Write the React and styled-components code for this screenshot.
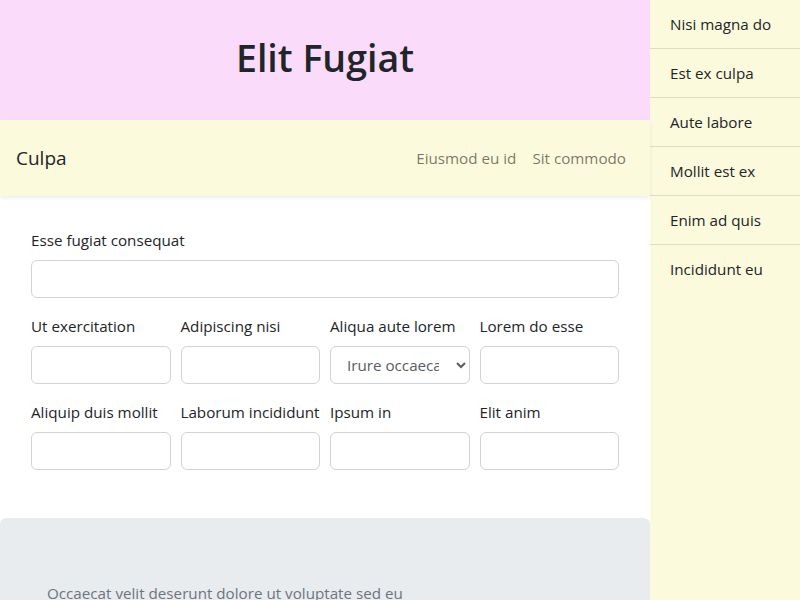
import React from "react";
import styled, { createGlobalStyle } from "styled-components";

const Global = createGlobalStyle`
  html, body { margin: 0; padding: 0; }
  body {
    font-family: "Open Sans", "Noto Sans", "Liberation Sans", sans-serif;
    font-size: 15.2px;
    line-height: 24px;
    color: #212529;
    background: #fff;
    overflow: hidden;
  }
  * { box-sizing: border-box; }
`;

const Page = styled.div`
  display: flex;
  width: 800px;
  min-height: 600px;
`;

const Main = styled.main`
  width: 650px;
  flex: none;
  display: flex;
  flex-direction: column;
`;

const Header = styled.header`
  background: #fadcfa;
  height: 120px;
  display: flex;
  align-items: center;
  justify-content: center;
  padding-bottom: 4px;
`;

const Title = styled.h1`
  margin: 0;
  font-size: 37.5px;
  line-height: 48px;
  font-weight: 600;
  color: #212529;
`;

const NavBar = styled.nav`
  position: relative;
  z-index: 1;
  background: #fcfadc;
  height: 76px;
  display: flex;
  align-items: center;
  justify-content: space-between;
  padding: 0 16px;
  box-shadow: 0 2px 4px rgba(0, 0, 0, 0.075);
`;

const Brand = styled.span`
  font-size: 19px;
  line-height: 30px;
`;

const NavLinks = styled.div`
  display: flex;
`;

const NavLink = styled.a`
  padding: 8px;
  color: rgba(0, 0, 0, 0.55);
  text-decoration: none;
`;

const Form = styled.form`
  background: #fff;
  padding: 32px 31px 48px;
  display: flex;
  flex-direction: column;
  gap: 16px;
`;

const Row = styled.div`
  display: grid;
  grid-template-columns: repeat(${(p) => p.$cols}, 1fr);
  gap: 10px;
`;

const Field = styled.div`
  display: flex;
  flex-direction: column;
  min-width: 0;
`;

const Label = styled.label`
  margin-bottom: 8px;
  line-height: 24px;
  white-space: nowrap;
`;

const Input = styled.input`
  height: 38px;
  width: 100%;
  border: 1px solid #ced4da;
  border-radius: 6px;
  background: #fff;
  font: inherit;
  padding: 6px 12px;
`;

const Select = styled.select`
  height: 38px;
  width: 100%;
  border: 1px solid #ced4da;
  border-radius: 6px;
  background: #fff;
  font: inherit;
  color: #595c5f;
  padding: 6px 14px 6px 12px;
`;

const Jumbo = styled.section`
  background: #e9ecef;
  border-radius: 6px 6px 0 0;
  padding: 63px 47px 48px;
  min-height: 120px;
`;

const Lead = styled.p`
  margin: 0;
  color: #6c757d;
  line-height: 24px;
`;

const Sidebar = styled.aside`
  width: 150px;
  flex: none;
  background: #fcfadc;
  min-height: 600px;
`;

const List = styled.ul`
  list-style: none;
  margin: 0;
  padding: 0;
`;

const Item = styled.li`
  padding: 12px 20px;
  line-height: 24px;
  border-bottom: 1px solid #dedcc4;
  white-space: nowrap;
  &:last-child { border-bottom: none; }
`;

const rows = [
  ["Ut exercitation", "Adipiscing nisi", "Aliqua aute lorem", "Lorem do esse"],
  ["Aliquip duis mollit", "Laborum incididunt", "Ipsum in", "Elit anim"],
];

export default function App() {
  return (
    <>
      <Global />
      <Page>
        <Main>
          <Header>
            <Title>Elit Fugiat</Title>
          </Header>
          <NavBar>
            <Brand>Culpa</Brand>
            <NavLinks>
              <NavLink href="#">Eiusmod eu id</NavLink>
              <NavLink href="#">Sit commodo</NavLink>
            </NavLinks>
          </NavBar>
          <Form onSubmit={(e) => e.preventDefault()}>
            <Row $cols={1}>
              <Field>
                <Label>Esse fugiat consequat</Label>
                <Input type="text" />
              </Field>
            </Row>
            {rows.map((r, i) => (
              <Row $cols={4} key={i}>
                {r.map((l) => (
                  <Field key={l}>
                    <Label>{l}</Label>
                    {l === "Aliqua aute lorem" ? (
                      <Select defaultValue="a">
                        <option value="a">Irure occaecat</option>
                      </Select>
                    ) : (
                      <Input type="text" />
                    )}
                  </Field>
                ))}
              </Row>
            ))}
          </Form>
          <Jumbo>
            <Lead>Occaecat velit deserunt dolore ut voluptate sed eu</Lead>
          </Jumbo>
        </Main>
        <Sidebar>
          <List>
            {["Nisi magna do", "Est ex culpa", "Aute labore", "Mollit est ex", "Enim ad quis", "Incididunt eu"].map((t) => (
              <Item key={t}>{t}</Item>
            ))}
          </List>
        </Sidebar>
      </Page>
    </>
  );
}
